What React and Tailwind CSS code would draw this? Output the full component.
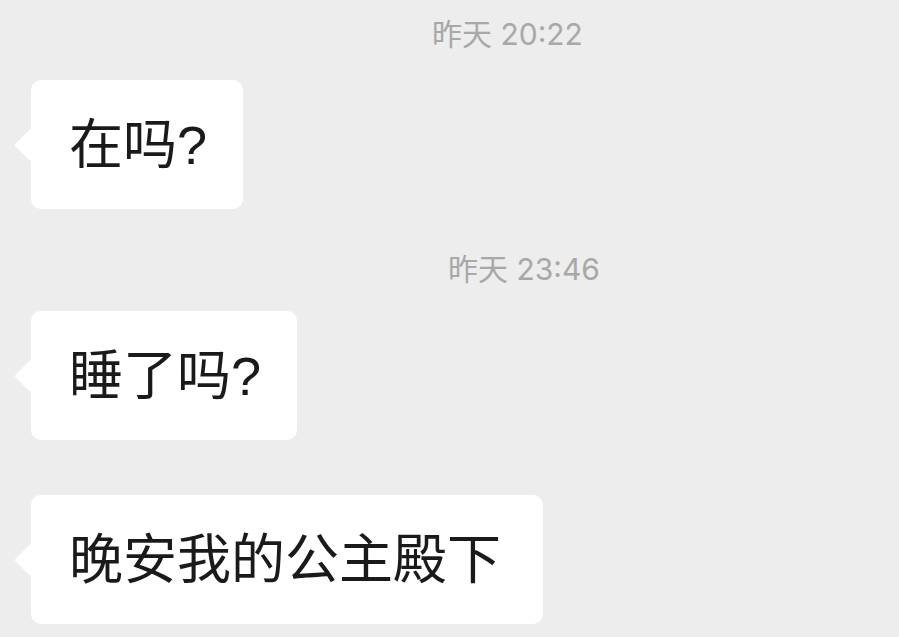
export default function App() {
  const font = { fontFamily: '"Liberation Sans", "Noto Sans CJK SC", sans-serif' };
  const tsFont = { fontFamily: 'Inter, "Noto Sans CJK SC", sans-serif' };
  const Bubble = ({ children, pr }) => (
    <div className={`relative ml-[31px] flex h-[129px] w-fit items-center rounded-[10px] bg-white pl-[38px] ${pr}`}>
      <span className="absolute left-[-12px] top-1/2 -mt-[12px] h-[24px] w-[24px] rotate-45 rounded-[3px] bg-white" />
      <span className="relative text-[54px] leading-none text-[#1a1a1a]">{children}</span>
    </div>
  );
  return (
    <div className="h-[637px] w-[899px] overflow-hidden bg-[#ededed]" style={font}>
      <div className="flex h-[80px] items-center pb-[12px] pl-[432px] text-[30px] leading-none text-[#a8a8a8]" style={tsFont}>
        昨天 20:22
      </div>
      <Bubble pr="pr-[36px]">在吗?</Bubble>
      <div className="flex h-[102px] items-center pl-[448px] pt-[17px] text-[30px] leading-none text-[#a8a8a8]" style={tsFont}>
        昨天 23:46
      </div>
      <Bubble pr="pr-[36px]">睡了吗?</Bubble>
      <div className="h-[55px]" />
      <Bubble pr="pr-[42px]">晚安我的公主殿下</Bubble>
    </div>
  );
}
